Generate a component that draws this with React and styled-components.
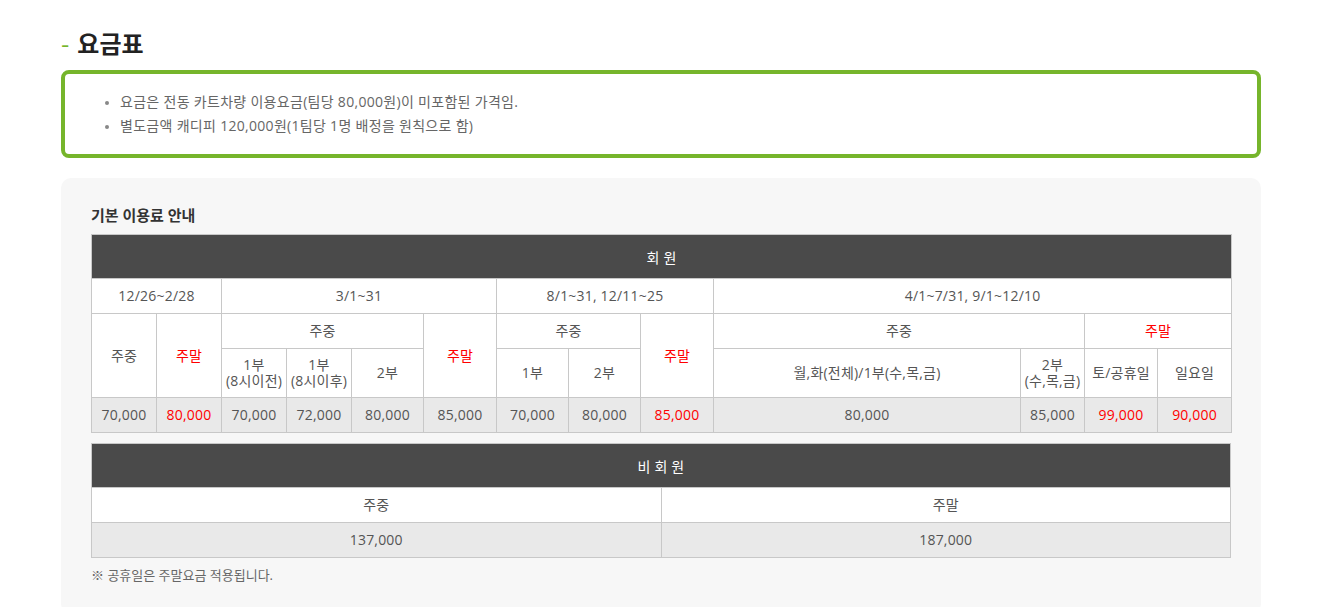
import styled, { createGlobalStyle } from 'styled-components';

const GlobalStyle = createGlobalStyle`
  body {
    margin: 0;
    background: #fff;
    font-family: "Open Sans", "Noto Sans CJK KR", sans-serif;
    color: #555;
  }
`;

const Page = styled.div`
  width: 1200px;
  padding: 26px 0 40px 61px;
`;

const Title = styled.h2`
  margin: 0;
  display: flex;
  align-items: center;
  gap: 8px;
  font-family: "Noto Sans CJK KR", sans-serif;
  font-size: 24px;
  line-height: 34px;
  font-weight: 700;
  color: #222;
`;

const Dash = styled.span`
  color: #76b52b;
  font-weight: 400;
  font-size: 24px;
`;

const NoticeBox = styled.div`
  margin-top: 10px;
  border: 4px solid #76b52b;
  border-radius: 8px;
  padding: 16px 0;
`;

const NoticeList = styled.ul`
  margin: 0;
  padding-left: 55px;
  font-size: 14px;
  line-height: 24px;
  letter-spacing: 0.3px;
  color: #666;

  li::marker {
    color: #888;
    font-size: 12px;
  }
`;

const Panel = styled.div`
  margin-top: 20px;
  background: #f7f7f7;
  border-radius: 10px;
  padding: 27px 30px 30px;
`;

const PanelTitle = styled.h3`
  margin: 0 0 9px;
  font-size: 15px;
  line-height: 20px;
  font-weight: 700;
  color: #333;
`;

const Table = styled.table`
  width: 1140px;
  border-collapse: collapse;
  table-layout: fixed;
  text-align: center;
  font-size: 14px;
  letter-spacing: 0.2px;
  color: #555;
  & + & {
    margin-top: 10px;
  }
`;

const HeadCell = styled.th`
  height: 43px;
  padding: 0;
  background: #4a4a4a;
  color: #fff;
  font-weight: 400;
  border: 1px solid #c8c8c8;
`;

const Cell = styled.td`
  height: ${p => p.$h || 34}px;
  padding: 0;
  border: 1px solid #c8c8c8;
  background: ${p => (p.$price ? '#e9e9e9' : '#fff')};
  color: ${p => (p.$red ? '#ff0000' : '#555')};
  line-height: ${p => (p.$tight ? '16px' : '20px')};
`;

const Footnote = styled.p`
  margin: 7px 0 0;
  font-size: 13px;
  color: #666;
`;

const colWidths = [65, 65, 65, 65, 72, 73, 72, 72, 73, 307, 64, 73, 74];

const prices = [
  ['70,000'], ['80,000', true], ['70,000'], ['72,000'], ['80,000'], ['85,000'],
  ['70,000'], ['80,000'], ['85,000', true], ['80,000'], ['85,000'],
  ['99,000', true], ['90,000', true],
];

export default function App() {
  return (
    <>
      <GlobalStyle />
      <Page>
        <Title><Dash>-</Dash>요금표</Title>
        <NoticeBox>
          <NoticeList>
            <li>요금은 전동 카트차량 이용요금(팀당 80,000원)이 미포함된 가격임.</li>
            <li>별도금액 캐디피 120,000원(1팀당 1명 배정을 원칙으로 함)</li>
          </NoticeList>
        </NoticeBox>

        <Panel>
          <PanelTitle>기본 이용료 안내</PanelTitle>
          <Table>
            <colgroup>
              {colWidths.map((w, i) => <col key={i} width={w} />)}
            </colgroup>
            <thead>
              <tr><HeadCell colSpan={13}>회 원</HeadCell></tr>
            </thead>
            <tbody>
              <tr>
                <Cell colSpan={2}>12/26~2/28</Cell>
                <Cell colSpan={4}>3/1~31</Cell>
                <Cell colSpan={3}>8/1~31, 12/11~25</Cell>
                <Cell colSpan={4}>4/1~7/31, 9/1~12/10</Cell>
              </tr>
              <tr>
                <Cell rowSpan={2}>주중</Cell>
                <Cell rowSpan={2} $red>주말</Cell>
                <Cell colSpan={3}>주중</Cell>
                <Cell rowSpan={2} $red>주말</Cell>
                <Cell colSpan={2}>주중</Cell>
                <Cell rowSpan={2} $red>주말</Cell>
                <Cell colSpan={2}>주중</Cell>
                <Cell colSpan={2} $red>주말</Cell>
              </tr>
              <tr>
                <Cell $h={48} $tight>1부<br />(8시이전)</Cell>
                <Cell $h={48} $tight>1부<br />(8시이후)</Cell>
                <Cell $h={48}>2부</Cell>
                <Cell $h={48}>1부</Cell>
                <Cell $h={48}>2부</Cell>
                <Cell $h={48}>월,화(전체)/1부(수,목,금)</Cell>
                <Cell $h={48} $tight>2부<br />(수,목,금)</Cell>
                <Cell $h={48}>토/공휴일</Cell>
                <Cell $h={48}>일요일</Cell>
              </tr>
              <tr>
                {prices.map(([v, red], i) => (
                  <Cell key={i} $price $red={red}>{v}</Cell>
                ))}
              </tr>
            </tbody>
          </Table>

          <Table>
            <thead>
              <tr><HeadCell colSpan={2}>비 회 원</HeadCell></tr>
            </thead>
            <tbody>
              <tr>
                <Cell>주중</Cell>
                <Cell>주말</Cell>
              </tr>
              <tr>
                <Cell $price>137,000</Cell>
                <Cell $price>187,000</Cell>
              </tr>
            </tbody>
          </Table>
          <Footnote>※ 공휴일은 주말요금 적용됩니다.</Footnote>
        </Panel>
      </Page>
    </>
  );
}
